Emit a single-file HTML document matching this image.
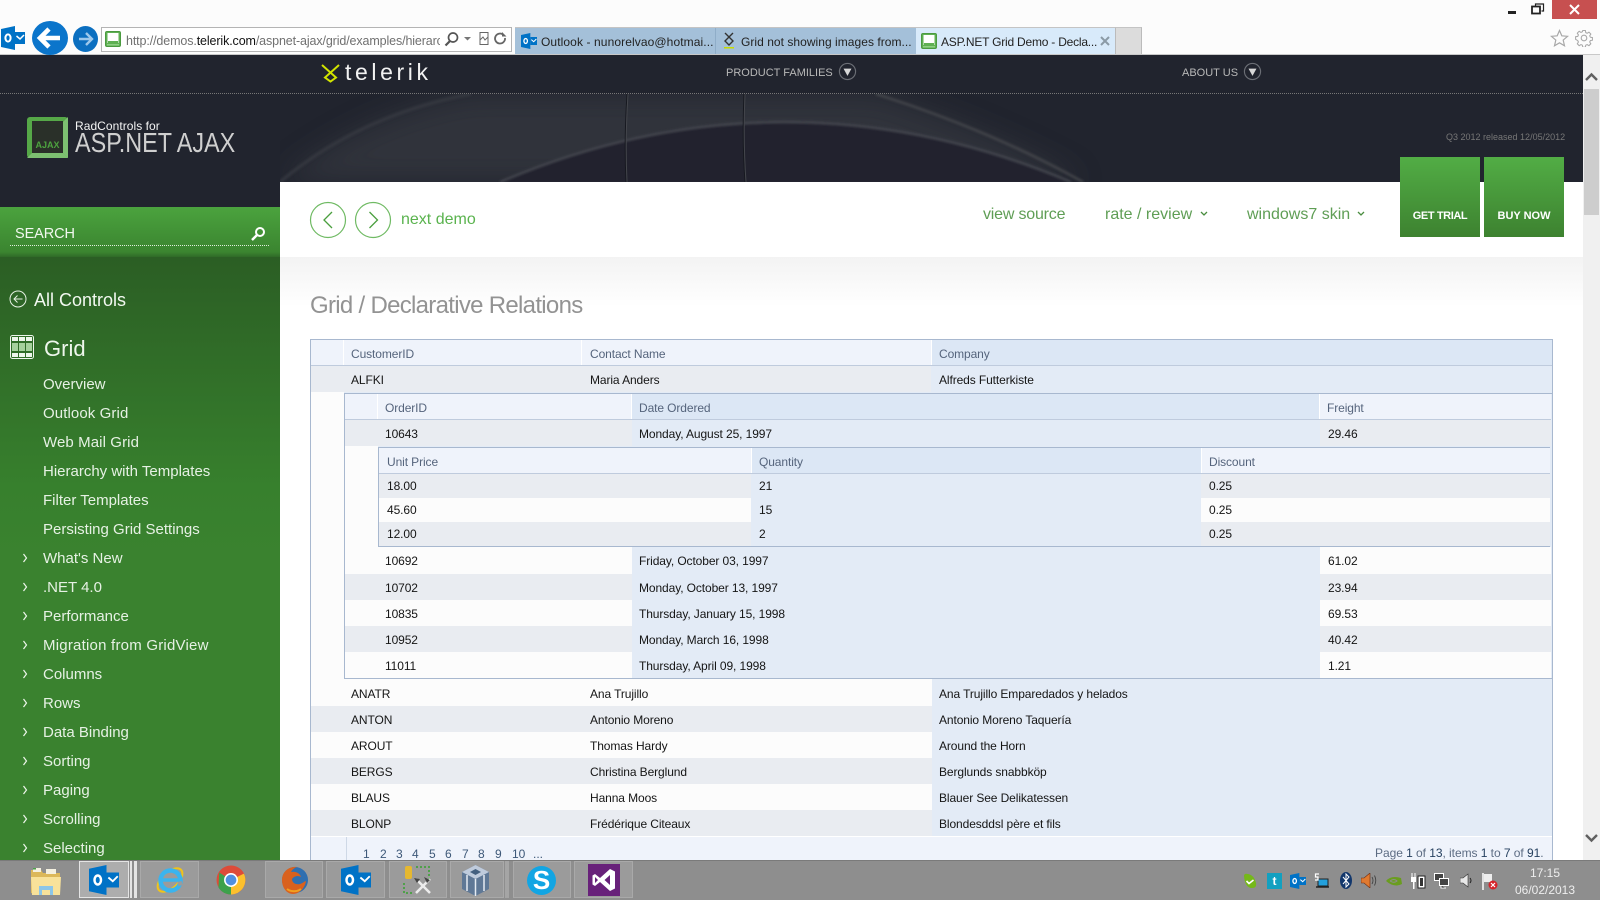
<!DOCTYPE html>
<html lang="en"><head><meta charset="utf-8"><title>ASP.NET Grid Demo</title>
<style>
html,body{margin:0;padding:0;width:1600px;height:900px;overflow:hidden;background:#fff}
body{position:relative;font-family:"Liberation Sans",sans-serif}
div,span.t,svg.i{position:absolute}
.t{white-space:nowrap;position:absolute}
.r{position:absolute}
.c{font-size:12px;line-height:16px;color:#151515;letter-spacing:-.1px;position:absolute;white-space:nowrap}
.h{font-size:12px;line-height:16px;color:#55647c;letter-spacing:-.1px;position:absolute;white-space:nowrap}
.m{position:absolute;left:43px;font-size:15px;line-height:20px;color:#e6f1e4;white-space:nowrap}
.a{position:absolute;left:22px}
.g{font-size:16px;line-height:20px;color:#5f9e55;position:absolute;white-space:nowrap}
.p{font-size:12px;line-height:16px;color:#3d5878;position:absolute;top:846px}
.tb{position:absolute;top:861px;height:37px;background:#9b9b9b;border:1px solid #a9a9a9;box-sizing:border-box}
.tab{font-size:12px;line-height:16px;color:#222;position:absolute;top:34px;white-space:nowrap}
</style></head><body>

<svg width="0" height="0" style="position:absolute"><defs>
<symbol id="ol" viewBox="0 0 24 24"><path d="M0 3L14 0V24L0 21Z" fill="#0072c6"/><rect x="14" y="6" width="10" height="12" fill="#0072c6"/><ellipse cx="7" cy="12" rx="2.6" ry="3.6" fill="none" stroke="#fff" stroke-width="2"/><path d="M15.500 10l3.500 3 4-4" fill="none" stroke="#fff" stroke-width="1.500"/></symbol>
<symbol id="fav" viewBox="0 0 16 16"><rect x=".5" y=".5" width="15" height="15" rx="1.500" fill="#5fb053" stroke="#4a9a3f"/><rect x="2.500" y="2" width="11" height="10" fill="#fff"/><rect x="3" y="10" width="10" height="2" fill="#5fb053"/><rect x="2" y="13" width="12" height="1.500" fill="#8fd084"/></symbol>
<symbol id="dn" viewBox="0 0 20 20"><circle cx="10" cy="10" r="8.500" fill="none" stroke="#6b6e75" stroke-width="1.200"/><path d="M5.800 7h8.400L10 14.600Z" fill="#d8d8d8"/></symbol>
</defs></svg>

<!-- browser chrome -->
<div class="r" style="left:0;top:0;width:1600px;height:55px;background:#fcfcfc"></div>
<div class="r" style="left:0;top:54px;width:1600px;height:1px;background:#c9c9c9"></div>
<div class="r" style="left:1552px;top:0;width:45px;height:19px;background:#c75050"></div>
<svg class="i" style="left:1552px;top:0" width="45" height="19"><path d="M18 5l9 9M27 5l-9 9" stroke="#fff" stroke-width="2"/></svg>
<div class="r" style="left:1508px;top:11px;width:8px;height:2.500px;background:#222"></div>
<svg class="i" style="left:1531px;top:3px" width="14" height="12"><path d="M4.500 3V1h8v7h-2" fill="none" stroke="#222" stroke-width="1.200"/><rect x="1" y="3.500" width="8" height="7" fill="none" stroke="#222" stroke-width="1.800"/></svg>
<svg class="i" style="left:1550px;top:29px" width="19" height="19" viewBox="0 0 19 19"><path d="M9.500 1.500l2.300 5.300 5.800.5-4.400 3.800 1.300 5.700-5-3-5 3 1.300-5.700L1.400 7.300l5.800-.5z" fill="none" stroke="#a8a8a8" stroke-width="1.200"/></svg>
<svg class="i" style="left:1575px;top:29px" width="18" height="18" viewBox="0 0 18 18"><g fill="none" stroke="#a8a8a8" stroke-width="1.100"><circle cx="9" cy="9" r="2.800"/><path d="M7.600 1h2.800l.4 2.200 1.500.7 1.900-1.200 2 2-1.200 1.900.7 1.500 2.200.4v2.800l-2.200.4-.7 1.500 1.200 1.900-2 2-1.900-1.200-1.500.7-.4 2.200H7.600l-.4-2.200-1.500-.7-1.900 1.200-2-2 1.200-1.900-.7-1.500L0 10.400V7.600l2.300-.4.7-1.500L1.800 3.800l2-2 1.900 1.200 1.500-.7z" transform="translate(.6 .6) scale(.94)"/></g></svg>

<svg class="i" style="left:1px;top:26px" width="24" height="24"><use href="#ol"/></svg>
<svg class="i" style="left:32px;top:21px" width="36" height="34" viewBox="0 0 36 34"><ellipse cx="18" cy="17" rx="18" ry="17" fill="#0b75cb"/><path d="M8 17h20M17 8l-9 9 9 9" fill="none" stroke="#fff" stroke-width="4.600"/></svg>
<svg class="i" style="left:73px;top:26px" width="25" height="26" viewBox="0 0 25 26"><ellipse cx="12.500" cy="13" rx="12.500" ry="13" fill="#0b6fc0"/><path d="M6 13h12M13 7l6 6-6 6" fill="none" stroke="#9cc8ec" stroke-width="2.400"/></svg>
<div class="r" style="left:101px;top:27px;width:409px;height:23px;border:1px solid #b4b4b4;background:#fff"></div>
<svg class="i" style="left:105px;top:31px" width="16" height="16"><use href="#fav"/></svg>
<div class="t" style="left:126px;top:33px;width:314px;overflow:hidden;font-size:12.500px;line-height:16px;color:#707070;letter-spacing:-.12px">http://demos.<span style="color:#111">telerik.com</span>/aspnet-ajax/grid/examples/hierarchy</div>
<svg class="i" style="left:444px;top:31px" width="64" height="16" viewBox="0 0 64 16"><circle cx="9" cy="6.500" r="4.500" fill="none" stroke="#555" stroke-width="1.700"/><path d="M6 10L1.500 14.500" stroke="#555" stroke-width="2.200"/><path d="M20 6h7l-3.500 3.500z" fill="#777"/><rect x="36" y="1.500" width="8" height="12" fill="none" stroke="#666"/><path d="M36 9l3-3 2 3 3-3" fill="none" stroke="#666"/><path d="M61 7a5 5 0 1 1-2-3.500" fill="none" stroke="#666" stroke-width="1.800"/><path d="M58 1v4.500h4.500" fill="#666"/></svg>

<div class="r" style="left:515px;top:27px;width:627px;height:27px;background:#a4c0d9;box-shadow:inset 0 1px 0 #c4c4c4"></div>
<div class="r" style="left:715px;top:28px;width:1px;height:26px;background:#8fadc8"></div>
<div class="r" style="left:916px;top:28px;width:199px;height:26px;background:#d8eafa"></div>
<div class="r" style="left:1115px;top:27px;width:27px;height:27px;background:#dcdcdc;border-left:1px solid #bbb;border-right:1px solid #bbb;border-top:1px solid #c4c4c4;box-sizing:border-box"></div>
<svg class="i" style="left:521px;top:33px" width="16" height="16"><use href="#ol"/></svg>
<div class="tab" style="left:541px;letter-spacing:.1px">Outlook - nunorelvao@hotmai...</div>
<svg class="i" style="left:722px;top:32px" width="14" height="18" viewBox="0 0 14 18"><path d="M3 1l8 8-4 4-4-4 8-8" fill="none" stroke="#333" stroke-width="1.400"/><rect x="2" y="15" width="10" height="1.500" fill="#c7dc00"/></svg>
<div class="tab" style="left:741px;letter-spacing:.04px">Grid not showing images from...</div>
<svg class="i" style="left:921px;top:33px" width="16" height="16"><use href="#fav"/></svg>
<div class="tab" style="left:941px;letter-spacing:-.22px">ASP.NET Grid Demo - Decla...</div>
<svg class="i" style="left:1100px;top:36px" width="10" height="10"><path d="M1 1l8 8M9 1l-8 8" stroke="#8b9aa6" stroke-width="2"/></svg>

<!-- dark header -->
<div class="r" style="left:0;top:55px;width:1583px;height:152px;background:#21242e"></div>
<svg class="i" style="left:280px;top:94px" width="1303" height="88" viewBox="280 94 1303 88">
<defs><filter id="b"><feGaussianBlur stdDeviation="1.200"/></filter><filter id="b2"><feGaussianBlur stdDeviation="14"/></filter></defs>
<path d="M280 182Q360 115 471 94H876Q990 130 1083 182Z" fill="#3b3e45" filter="url(#b2)" opacity=".6"/>
<path d="M500 182Q640 122 784 122Q930 122 1071 182Z" fill="#21242e" filter="url(#b)"/>
<path d="M500 182Q640 122 784 122Q930 122 1071 182" fill="none" stroke="#4b4e55" stroke-width="2" filter="url(#b)"/>
<path d="M876 94Q990 130 1083 182" fill="none" stroke="#4a4c50" stroke-width="2" filter="url(#b)"/>
<path d="M280 182Q360 115 471 94" fill="none" stroke="#34373f" stroke-width="3" filter="url(#b)"/>
<path d="M627 94Q624 140 626 182M744 94Q742 140 745 182" fill="none" stroke="#16181f" stroke-width="1"/>
<path d="M628 94Q625 140 627 182M745 94Q743 140 746 182" fill="none" stroke="#44464c" stroke-width="1"/>
</svg>
<svg class="i" style="left:320px;top:63px" width="20" height="20"><path d="M2 2L16 14.500 10.500 18.500 5 14.500 19 2" fill="none" stroke="#d2e400" stroke-width="2"/></svg>
<div class="t" style="left:345px;top:59px;font-size:23px;line-height:26px;letter-spacing:3.600px;color:#f2f2f2">telerik</div>
<div class="t" style="left:726px;top:65px;font-size:11px;line-height:16px;color:#b8b8b8">PRODUCT FAMILIES</div>
<svg class="i" style="left:838px;top:62px" width="19" height="19"><use href="#dn"/></svg>
<div class="t" style="left:1182px;top:65px;font-size:11px;line-height:16px;color:#b8b8b8">ABOUT US</div>
<svg class="i" style="left:1243px;top:62px" width="19" height="19"><use href="#dn"/></svg>
<div class="r" style="left:0;top:93px;width:1583px;height:0;border-top:1px dotted #777"></div>

<svg class="i" style="left:27px;top:117px" width="41" height="41" viewBox="0 0 41 41"><rect width="41" height="41" rx="3" fill="#56a848"/><path d="M5 36L0 41h41l-5-5z" fill="#7dc071"/><path d="M36 5V36l5 5V0z" fill="#7dc071"/><rect x="5" y="4" width="31" height="32" fill="#2a3029"/><text x="20.500" y="31" font-family="Liberation Sans" font-size="9" font-weight="bold" fill="#4da33f" text-anchor="middle">AJAX</text></svg>
<div class="t" style="left:75px;top:118px;font-size:12px;line-height:16px;color:#f4f4f4;letter-spacing:.05px">RadControls for</div>
<div class="t" style="left:75px;top:127px;font-size:28px;line-height:32px;color:#cfcfcf;transform:scaleX(.835);transform-origin:0 0;font-weight:400">ASP.NET AJAX</div>
<div class="t" style="left:1446px;top:130px;font-size:9px;line-height:14px;color:#777;letter-spacing:0">Q3 2012 released 12/05/2012</div>

<!-- sidebar -->
<div class="r" style="left:0;top:207px;width:280px;height:50px;background:linear-gradient(#4ba33e,#3b8530 90%,#2f6a27)"></div>
<div class="r" style="left:0;top:257px;width:280px;height:643px;background:linear-gradient(#2b5e24 0,#37802d 230px,#3a822f 300px,#3a822f 100%)"></div>
<div class="t" style="left:15px;top:225px;font-size:14.500px;line-height:18px;color:#f2f8f0;letter-spacing:-.1px">SEARCH</div>
<div class="r" style="left:10px;top:245px;width:259px;height:0;border-top:1px dotted #dfeedd"></div>
<svg class="i" style="left:250px;top:226px" width="16" height="16" viewBox="0 0 16 16"><circle cx="10" cy="6" r="4" fill="none" stroke="#fff" stroke-width="2"/><path d="M7 9l-5 5" stroke="#fff" stroke-width="2.400"/></svg>
<svg class="i" style="left:9px;top:290px" width="18" height="18" viewBox="0 0 18 18"><circle cx="9" cy="9" r="8" fill="none" stroke="#e6f1e4" stroke-width="1"/><path d="M13.500 9H5M8.500 5.500L5 9l3.500 3.500" fill="none" stroke="#e6f1e4" stroke-width="1"/></svg>
<div class="t" style="left:34px;top:289px;font-size:18px;line-height:22px;color:#f2f8f0">All Controls</div>
<svg class="i" style="left:10px;top:335px" width="24" height="24" viewBox="0 0 24 24"><rect x=".5" y=".5" width="23" height="23" rx="2" fill="#2f6c27" stroke="#eef6ec"/><g fill="#eef6ec"><rect x="2" y="2" width="6" height="4"/><rect x="9" y="2" width="6" height="4"/><rect x="16" y="2" width="6" height="4"/><rect x="2" y="18" width="6" height="4"/><rect x="9" y="18" width="6" height="4"/><rect x="16" y="18" width="6" height="4"/></g><g fill="#a5d19c"><rect x="2" y="8" width="6" height="8"/><rect x="9" y="8" width="6" height="8"/><rect x="16" y="8" width="6" height="8"/></g></svg>
<div class="t" style="left:44px;top:336px;font-size:22px;line-height:26px;color:#eef6ec">Grid</div>
<div class="m" style="top:375px">Overview</div>
<div class="m" style="top:404px;letter-spacing:.1px">Outlook Grid</div>
<div class="m" style="top:433px;letter-spacing:.1px">Web Mail Grid</div>
<div class="m" style="top:462px">Hierarchy with Templates</div>
<div class="m" style="top:491px">Filter Templates</div>
<div class="m" style="top:520px">Persisting Grid Settings</div>
<div class="m" style="top:549px">What's New</div>
<div class="m" style="top:578px">.NET 4.0</div>
<div class="m" style="top:607px">Performance</div>
<div class="m" style="top:636px;letter-spacing:.22px">Migration from GridView</div>
<div class="m" style="top:665px">Columns</div>
<div class="m" style="top:694px">Rows</div>
<div class="m" style="top:723px">Data Binding</div>
<div class="m" style="top:752px">Sorting</div>
<div class="m" style="top:781px">Paging</div>
<div class="m" style="top:810px">Scrolling</div>
<div class="m" style="top:839px">Selecting</div>
<svg class="i" style="left:22px;top:553px" width="6" height="300" viewBox="0 0 6 300"><g fill="none" stroke="#eef6ec" stroke-width="1.200"><path d="M1.500 1l3 4-3 4"/><path d="M1.500 30l3 4-3 4"/><path d="M1.500 59l3 4-3 4"/><path d="M1.500 88l3 4-3 4"/><path d="M1.500 117l3 4-3 4"/><path d="M1.500 146l3 4-3 4"/><path d="M1.500 175l3 4-3 4"/><path d="M1.500 204l3 4-3 4"/><path d="M1.500 233l3 4-3 4"/><path d="M1.500 262l3 4-3 4"/><path d="M1.500 291l3 4-3 4"/></g></svg>

<!-- content -->
<div class="r" style="left:280px;top:182px;width:1303px;height:75px;background:#fff"></div>
<div class="r" style="left:280px;top:257px;width:1303px;height:50px;background:linear-gradient(#f3f3f3,#fff)"></div>
<svg class="i" style="left:309px;top:201px" width="84" height="38" viewBox="0 0 84 38"><circle cx="19" cy="19" r="17.500" fill="none" stroke="#6fba63" stroke-width="1.200"/><circle cx="64" cy="19" r="17.500" fill="none" stroke="#6fba63" stroke-width="1.200"/><path d="M23 11l-8 8 8 8" fill="none" stroke="#4a9f3e" stroke-width="1.300"/><path d="M60.500 11l8 8-8 8" fill="none" stroke="#4a9f3e" stroke-width="1.300"/></svg>
<div class="g" style="left:401px;top:210px;color:#5ab34e">next demo</div>
<div class="g" style="left:983px;top:205px;letter-spacing:-.2px">view source</div>
<div class="g" style="left:1105px;top:205px">rate / review</div>
<div class="g" style="left:1247px;top:205px">windows7 skin</div>
<svg class="i" style="left:1200px;top:211px" width="8" height="6"><path d="M1 1l3 3 3-3" fill="none" stroke="#4a8d40" stroke-width="1.300"/></svg>
<svg class="i" style="left:1357px;top:211px" width="8" height="6"><path d="M1 1l3 3 3-3" fill="none" stroke="#4a8d40" stroke-width="1.300"/></svg>
<div class="r" style="left:1400px;top:157px;width:80px;height:80px;background:linear-gradient(#52ad45,#3d8230)"></div>
<div class="r" style="left:1484px;top:157px;width:80px;height:80px;background:linear-gradient(#52ad45,#3d8230)"></div>
<div class="t" style="left:1400px;top:208px;width:80px;text-align:center;font-size:11px;font-weight:bold;line-height:16px;color:#fff;letter-spacing:-.4px">GET TRIAL</div>
<div class="t" style="left:1484px;top:208px;width:80px;text-align:center;font-size:11px;font-weight:bold;line-height:16px;color:#fff">BUY NOW</div>
<div class="t" style="left:310px;top:291px;font-size:24px;line-height:30px;color:#939393;letter-spacing:-.7px">Grid / Declarative Relations</div>

<!-- outer grid -->
<div class="r" style="left:310px;top:339px;width:1243px;height:521px;border:1px solid #a8b8cf;border-bottom:0;box-sizing:border-box;background:#e3ebf6"></div>
<div class="r" style="left:311px;top:340px;width:1241px;height:25px;background:#eff3fb"></div>
<div class="r" style="left:932px;top:340px;width:620px;height:25px;background:#dce7f5"></div>
<div class="r" style="left:343px;top:340px;width:1px;height:25px;background:#fff"></div>
<div class="r" style="left:581px;top:340px;width:1px;height:25px;background:#fff"></div>
<div class="r" style="left:931px;top:340px;width:1px;height:25px;background:#fff"></div>
<div class="r" style="left:311px;top:365px;width:1241px;height:1px;background:#bfcbdd"></div>
<div class="r" style="left:311px;top:366px;width:620px;height:26px;background:#e9ecf1"></div>
<div class="r" style="left:311px;top:392px;width:33px;height:287px;background:#fcfcfc"></div>
<div class="h" style="left:351px;top:346px">CustomerID</div>
<div class="h" style="left:590px;top:346px">Contact Name</div>
<div class="h" style="left:939px;top:346px">Company</div>
<div class="c" style="left:351px;top:372px">ALFKI</div>
<div class="c" style="left:590px;top:372px">Maria Anders</div>
<div class="c" style="left:939px;top:372px">Alfreds Futterkiste</div>

<!-- nested orders -->
<div class="r" style="left:344px;top:393px;width:1208px;height:286px;border-top:1px solid #a8b8cf;border-left:1px solid #a8b8cf;border-bottom:1px solid #a8b8cf;box-sizing:border-box;background:#e3ebf6"></div>
<div class="r" style="left:345px;top:394px;width:1206px;height:25px;background:#eff3fb"></div>
<div class="r" style="left:632px;top:394px;width:687px;height:25px;background:#dce7f5"></div>
<div class="r" style="left:377px;top:394px;width:1px;height:25px;background:#fff"></div>
<div class="r" style="left:631px;top:394px;width:1px;height:25px;background:#fff"></div>
<div class="r" style="left:1319px;top:394px;width:1px;height:25px;background:#fff"></div>
<div class="r" style="left:345px;top:419px;width:1206px;height:1px;background:#bfcbdd"></div>
<div class="h" style="left:385px;top:400px">OrderID</div>
<div class="h" style="left:639px;top:400px">Date Ordered</div>
<div class="h" style="left:1327px;top:400px">Freight</div>
<div class="r" style="left:345px;top:420px;width:287px;height:26px;background:#e9ecf1"></div>
<div class="r" style="left:1320px;top:420px;width:231px;height:26px;background:#e9ecf1"></div>
<div class="c" style="left:385px;top:426px">10643</div>
<div class="c" style="left:639px;top:426px">Monday, August 25, 1997</div>
<div class="c" style="left:1328px;top:426px">29.46</div>
<div class="r" style="left:345px;top:446px;width:33px;height:102px;background:#fcfcfc"></div>

<!-- nested details -->
<div class="r" style="left:378px;top:447px;width:1172px;height:100px;border-top:1px solid #a8b8cf;border-left:1px solid #a8b8cf;border-bottom:1px solid #a8b8cf;box-sizing:border-box;background:#e3ebf6"></div>
<div class="r" style="left:379px;top:448px;width:1171px;height:25px;background:#eff3fb"></div>
<div class="r" style="left:752px;top:448px;width:449px;height:25px;background:#dce7f5"></div>
<div class="r" style="left:751px;top:448px;width:1px;height:25px;background:#fff"></div>
<div class="r" style="left:1201px;top:448px;width:1px;height:25px;background:#fff"></div>
<div class="r" style="left:379px;top:473px;width:1171px;height:1px;background:#bfcbdd"></div>
<div class="h" style="left:387px;top:454px">Unit Price</div>
<div class="h" style="left:759px;top:454px">Quantity</div>
<div class="h" style="left:1209px;top:454px">Discount</div>
<div class="r" style="left:379px;top:474px;width:372px;height:24px;background:#e9ecf1"></div>
<div class="r" style="left:379px;top:498px;width:372px;height:24px;background:#fcfcfc"></div>
<div class="r" style="left:379px;top:522px;width:372px;height:24px;background:#e9ecf1"></div>
<div class="r" style="left:1201px;top:474px;width:349px;height:24px;background:#e9ecf1"></div>
<div class="r" style="left:1201px;top:498px;width:349px;height:24px;background:#fcfcfc"></div>
<div class="r" style="left:1201px;top:522px;width:349px;height:24px;background:#e9ecf1"></div>
<div class="c" style="left:387px;top:478px">18.00</div><div class="c" style="left:759px;top:478px">21</div><div class="c" style="left:1209px;top:478px">0.25</div>
<div class="c" style="left:387px;top:502px">45.60</div><div class="c" style="left:759px;top:502px">15</div><div class="c" style="left:1209px;top:502px">0.25</div>
<div class="c" style="left:387px;top:526px">12.00</div><div class="c" style="left:759px;top:526px">2</div><div class="c" style="left:1209px;top:526px">0.25</div>

<!-- remaining orders -->
<div class="r" style="left:345px;top:547px;width:287px;height:27px;background:#fcfcfc"></div><div class="r" style="left:1320px;top:547px;width:231px;height:27px;background:#fcfcfc"></div>
<div class="r" style="left:345px;top:574px;width:287px;height:26px;background:#e9ecf1"></div><div class="r" style="left:1320px;top:574px;width:231px;height:26px;background:#e9ecf1"></div>
<div class="r" style="left:345px;top:600px;width:287px;height:26px;background:#fcfcfc"></div><div class="r" style="left:1320px;top:600px;width:231px;height:26px;background:#fcfcfc"></div>
<div class="r" style="left:345px;top:626px;width:287px;height:26px;background:#e9ecf1"></div><div class="r" style="left:1320px;top:626px;width:231px;height:26px;background:#e9ecf1"></div>
<div class="r" style="left:345px;top:652px;width:287px;height:26px;background:#fcfcfc"></div><div class="r" style="left:1320px;top:652px;width:231px;height:26px;background:#fcfcfc"></div>
<div class="c" style="left:385px;top:553px">10692</div><div class="c" style="left:639px;top:553px">Friday, October 03, 1997</div><div class="c" style="left:1328px;top:553px">61.02</div>
<div class="c" style="left:385px;top:580px">10702</div><div class="c" style="left:639px;top:580px">Monday, October 13, 1997</div><div class="c" style="left:1328px;top:580px">23.94</div>
<div class="c" style="left:385px;top:606px">10835</div><div class="c" style="left:639px;top:606px">Thursday, January 15, 1998</div><div class="c" style="left:1328px;top:606px">69.53</div>
<div class="c" style="left:385px;top:632px">10952</div><div class="c" style="left:639px;top:632px">Monday, March 16, 1998</div><div class="c" style="left:1328px;top:632px">40.42</div>
<div class="c" style="left:385px;top:658px">11011</div><div class="c" style="left:639px;top:658px">Thursday, April 09, 1998</div><div class="c" style="left:1328px;top:658px">1.21</div>

<!-- outer rows -->
<div class="r" style="left:311px;top:679px;width:621px;height:27px;background:#fcfcfc"></div>
<div class="r" style="left:311px;top:706px;width:621px;height:26px;background:#e9ecf1"></div>
<div class="r" style="left:311px;top:732px;width:621px;height:26px;background:#fcfcfc"></div>
<div class="r" style="left:311px;top:758px;width:621px;height:26px;background:#e9ecf1"></div>
<div class="r" style="left:311px;top:784px;width:621px;height:26px;background:#fcfcfc"></div>
<div class="r" style="left:311px;top:810px;width:621px;height:26px;background:#e9ecf1"></div>
<div class="c" style="left:351px;top:686px">ANATR</div><div class="c" style="left:590px;top:686px">Ana Trujillo</div><div class="c" style="left:939px;top:686px">Ana Trujillo Emparedados y helados</div>
<div class="c" style="left:351px;top:712px">ANTON</div><div class="c" style="left:590px;top:712px">Antonio Moreno</div><div class="c" style="left:939px;top:712px">Antonio Moreno Taquería</div>
<div class="c" style="left:351px;top:738px">AROUT</div><div class="c" style="left:590px;top:738px">Thomas Hardy</div><div class="c" style="left:939px;top:738px">Around the Horn</div>
<div class="c" style="left:351px;top:764px">BERGS</div><div class="c" style="left:590px;top:764px">Christina Berglund</div><div class="c" style="left:939px;top:764px">Berglunds snabbköp</div>
<div class="c" style="left:351px;top:790px">BLAUS</div><div class="c" style="left:590px;top:790px">Hanna Moos</div><div class="c" style="left:939px;top:790px">Blauer See Delikatessen</div>
<div class="c" style="left:351px;top:816px">BLONP</div><div class="c" style="left:590px;top:816px">Frédérique Citeaux</div><div class="c" style="left:939px;top:816px">Blondesddsl père et fils</div>

<!-- pager -->
<div class="r" style="left:311px;top:836px;width:1241px;height:24px;background:#eff3fb;border-top:1px solid #fff;box-sizing:border-box"></div>
<div class="r" style="left:346px;top:837px;width:1px;height:23px;background:#ced8e6"></div>
<div class="p" style="left:363px">1</div><div class="p" style="left:380px">2</div><div class="p" style="left:396px">3</div><div class="p" style="left:412px">4</div><div class="p" style="left:429px">5</div><div class="p" style="left:445px">6</div><div class="p" style="left:462px">7</div><div class="p" style="left:478px">8</div><div class="p" style="left:495px">9</div><div class="p" style="left:512px">10</div><div class="p" style="left:533px">...</div>
<div class="t" style="left:1375px;top:845px;font-size:12px;line-height:16px;color:#5d6c83;letter-spacing:-.05px">Page <span style="color:#26405f">1</span> of <span style="color:#26405f">13</span>, items <span style="color:#26405f">1</span> to <span style="color:#26405f">7</span> of <span style="color:#26405f">91</span>.</div>

<!-- scrollbar -->
<div class="r" style="left:1583px;top:55px;width:17px;height:805px;background:#f0f0f0"></div>
<div class="r" style="left:1584px;top:89px;width:15px;height:126px;background:#cdcdcd"></div>
<svg class="i" style="left:1585px;top:72px" width="13" height="10"><path d="M1 8l5.500-5.500L12 8" fill="none" stroke="#606060" stroke-width="2.400"/></svg>
<svg class="i" style="left:1585px;top:833px" width="13" height="10"><path d="M1 2l5.500 5.500L12 2" fill="none" stroke="#606060" stroke-width="2.400"/></svg>

<!-- taskbar -->
<div class="r" style="left:0;top:860px;width:1600px;height:40px;background:#8e8e8e;border-top:1px solid #7a7a7a;box-sizing:border-box"></div>
<svg class="i" style="left:30px;top:866px" width="32" height="30" viewBox="0 0 32 30"><path d="M1 4h10l2 3h17v20H1z" fill="#dcb85a"/><path d="M3 2h8v4H3z" fill="#f4f0e0"/><path d="M3 2h3v1.500H3z" fill="#4aa04a"/><path d="M16 3h10v5H16z" fill="#f4f0e0"/><path d="M1 11h30l-1 18H2z" fill="#f8e29a"/><path d="M9 29V20h14v9h-3v-5h-8v5z" fill="#8cc6e8"/></svg>
<div class="tb" style="left:79px;width:50px;background:#adadad;border:1px solid #e4e4e4"></div>
<div class="r" style="left:130px;top:861px;width:2px;height:37px;background:#e4e4e4"></div>
<div class="r" style="left:134px;top:861px;width:3px;height:37px;background:#e4e4e4"></div>
<svg class="i" style="left:89px;top:865px" width="30" height="30"><use href="#ol"/></svg>
<div class="tb" style="left:140px;width:59px"></div>
<svg class="i" style="left:154px;top:864px" width="32" height="32" viewBox="0 0 32 32"><ellipse cx="16" cy="16" rx="15" ry="8" fill="none" stroke="#f0c419" stroke-width="2" transform="rotate(-42 16 16)"/><circle cx="16.500" cy="16.500" r="10" fill="none" stroke="#3ab4ee" stroke-width="4.500"/><path d="M8 16h17" stroke="#3ab4ee" stroke-width="3.500"/><path d="M24 20l4-1" stroke="#9b9b9b" stroke-width="4"/></svg>
<svg class="i" style="left:216px;top:865px" width="30" height="30" viewBox="0 0 28 28"><circle cx="14" cy="14" r="13.500" fill="#dd4b39"/><path d="M14 27.500A13.500 13.500 0 0 0 26 8L14 14Z" fill="#fbc02d"/><path d="M14 14L14 27.500A13.500 13.500 0 0 1 2.300 21L3 7Z" fill="#3da14b"/><path d="M3 6.500A13.500 13.500 0 0 1 26 8L14 9Z" fill="#dd4b39"/><circle cx="14" cy="14" r="6.500" fill="#fff"/><circle cx="14" cy="14" r="5" fill="#4f8fe0"/></svg>
<div class="tb" style="left:265px;width:58px"></div>
<svg class="i" style="left:278px;top:865px" width="32" height="31" viewBox="0 0 32 31"><circle cx="17" cy="15" r="13" fill="#2f6fb0"/><path d="M4 15C4 6 12 1 19 2c-3 1-5 3-6 5 4-1 9 1 10 5-3-2-7-1-9 2 0 4 4 6 8 5 3-1 5-3 6-3-1 7-7 13-13 13C9 29 4 23 4 15z" fill="#d9611e"/><path d="M9 24c4 3 10 3 14 0" stroke="#f0a020" stroke-width="2" fill="none"/></svg>
<div class="tb" style="left:326px;width:59px"></div>
<svg class="i" style="left:341px;top:865px" width="30" height="30"><use href="#ol"/></svg>
<div class="tb" style="left:389px;width:58px"></div>
<svg class="i" style="left:402px;top:865px" width="31" height="31" viewBox="0 0 31 31"><rect x="3" y="1" width="7" height="13" rx="2" fill="#e6b830"/><path d="M14 2h13v14M2 18v10h10" fill="none" stroke="#4fa04a" stroke-width="2" stroke-dasharray="2 2"/><path d="M14 14l14 14M28 14L14 28" stroke="#ececec" stroke-width="2.500"/><path d="M12 13l6 1-3 4zM22 12l6 3-3 3z" fill="#444"/></svg>
<div class="tb" style="left:450px;width:54px"></div>
<div class="r" style="left:505px;top:861px;width:4px;height:37px;background:#a5a5a5"></div>
<svg class="i" style="left:461px;top:864px" width="29" height="33" viewBox="0 0 29 33"><path d="M14.500 1L28 8v17l-13.500 7L1 25V8z" fill="#5f7896"/><path d="M14.500 1L28 8l-13.500 7L1 8z" fill="#bfcbdc"/><path d="M14.500 15v17M6 11v16M23 11v16" stroke="#e5ebf2" stroke-width="1.500"/><path d="M9 8l5.500-3 5.500 3-5.500 3z" fill="#44607f"/></svg>
<div class="tb" style="left:513px;width:58px"></div>
<div class="r" style="left:527px;top:866px;width:29px;height:29px;border-radius:50%;background:#12a5e3"></div>
<div class="t" style="left:527px;top:865px;width:29px;text-align:center;font-size:26px;font-weight:bold;line-height:31px;color:#fff">S</div>
<div class="tb" style="left:574px;width:59px"></div>
<svg class="i" style="left:588px;top:864px" width="32" height="32" viewBox="0 0 32 32"><rect width="32" height="32" fill="#68217a"/><path d="M22 5l5 2.500v17L22 27 12 18l-5 4-2.500-1.500v-9L7 10l5 4zM22 11l-5.500 5 5.500 5zM7 13v6l3-3z" fill="#fff"/></svg>

<!-- tray -->
<svg class="i" style="left:1242px;top:873px" width="16" height="16" viewBox="0 0 16 16"><path d="M2 3q0-3 4-2 6 1 8 9 1 5-4 5-7 0-8-12z" fill="#75b81a"/><path d="M4.500 8l2.500 2.500 4.500-3.500" fill="none" stroke="#fff" stroke-width="1.600"/></svg>
<div class="r" style="left:1267px;top:873px;width:15px;height:16px;background:#12a0c0"></div>
<div class="t" style="left:1267px;top:873px;width:15px;text-align:center;font-size:12px;font-weight:bold;line-height:17px;color:#fff">t</div>
<svg class="i" style="left:1290px;top:873px" width="16" height="16"><use href="#ol"/></svg>
<svg class="i" style="left:1314px;top:872px" width="16" height="18" viewBox="0 0 16 18"><rect x="4" y="7" width="10" height="7" fill="#23a0dc" stroke="#222"/><path d="M2 15h13" stroke="#222" stroke-width="1.500"/><path d="M5 2H1.500v3H4v3H1" fill="none" stroke="#fff" stroke-width="1.200"/></svg>
<svg class="i" style="left:1340px;top:872px" width="12" height="17" viewBox="0 0 12 17"><ellipse cx="6" cy="8.500" rx="6" ry="8.500" fill="#12376c"/><path d="M3 5l6 7-3 3V2l3 3-6 7" fill="none" stroke="#fff" stroke-width="1"/></svg>
<svg class="i" style="left:1361px;top:873px" width="16" height="15" viewBox="0 0 16 15"><path d="M0 5h3l6-5v15L3 10H0z" fill="#e07a30" stroke="#6d2a10" stroke-width=".6"/><path d="M11 4q2 3.500 0 7M13.500 2.500q2.500 5 0 10" fill="none" stroke="#444" stroke-width=".9"/></svg>
<svg class="i" style="left:1386px;top:876px" width="16" height="10" viewBox="0 0 16 10"><path d="M0 5Q5-1 15 2L16 8Q8 12 0 5z" fill="#6a9d1e"/><path d="M4 5q4-3 7 0-3 2.500-7 0" fill="none" stroke="#8e8e8e"/></svg>
<svg class="i" style="left:1410px;top:873px" width="16" height="16" viewBox="0 0 16 16"><path d="M2 0v5M5 0v5" stroke="#fff"/><rect x="1" y="4" width="5" height="5" fill="#fff"/><rect x="3" y="9" width="1.500" height="7" fill="#fff"/><rect x="8" y="3" width="7" height="12" fill="#fff" stroke="#222"/><rect x="10" y="5" width="3" height="8" fill="#333"/></svg>
<svg class="i" style="left:1434px;top:873px" width="16" height="16" viewBox="0 0 16 16"><rect x=".5" y=".5" width="9" height="7" fill="#444" stroke="#fff"/><rect x="5.500" y="5.500" width="9" height="7" fill="#444" stroke="#fff"/><path d="M7 13v2h5" stroke="#fff"/></svg>
<svg class="i" style="left:1460px;top:873px" width="13" height="15" viewBox="0 0 13 15"><path d="M0 5h3l5-4v13L3 10H0z" fill="#e8e8e8" stroke="#333" stroke-width=".6"/><path d="M10 5q2 2.500 0 5" fill="none" stroke="#222"/></svg>
<svg class="i" style="left:1482px;top:873px" width="16" height="17" viewBox="0 0 16 17"><path d="M1 0v17" stroke="#fff" stroke-width="1.500"/><path d="M2 1h8v8H2z" fill="#eee"/><circle cx="11" cy="12" r="4.500" fill="#d6242a"/><path d="M9 10l4 4M13 10l-4 4" stroke="#fff" stroke-width="1.200"/></svg>
<div class="t" style="left:1500px;top:865px;width:90px;text-align:center;font-size:12px;line-height:16px;color:#eee">17:15</div>
<div class="t" style="left:1500px;top:882px;width:90px;text-align:center;font-size:12px;line-height:16px;color:#eee">06/02/2013</div>
</body></html>
